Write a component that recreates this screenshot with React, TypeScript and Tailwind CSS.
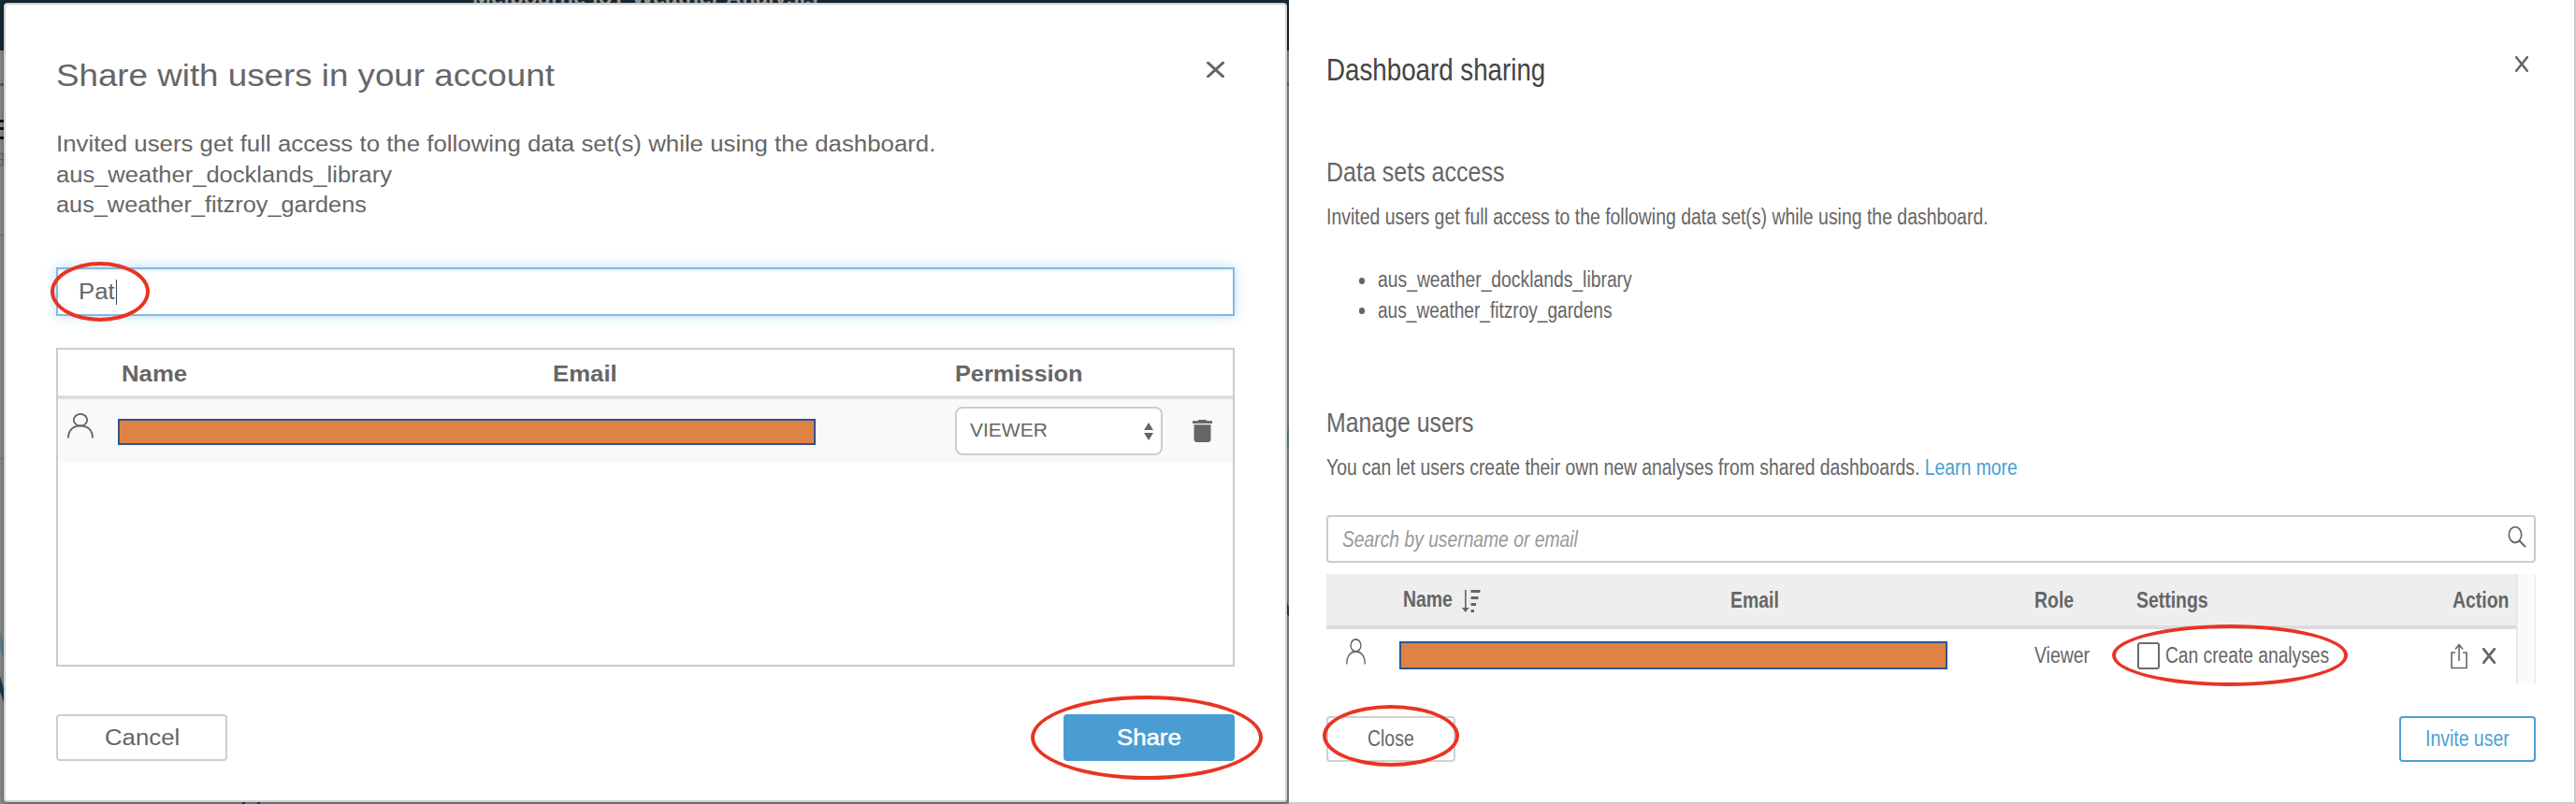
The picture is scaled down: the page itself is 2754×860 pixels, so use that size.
import type { ReactNode } from "react";
import { clsx } from "clsx";

// Helvetica-style text, stretched for the share dialog
function Wide({ children, scale = "scale-x-[1.12]" }: { children: ReactNode; scale?: string }) {
  return <span className={clsx("inline-block origin-left whitespace-nowrap", scale)}>{children}</span>;
}

// ...and condensed for the dashboard sharing page
function Narrow({ children, scale = "scale-x-[0.845]" }: { children: ReactNode; scale?: string }) {
  return <span className={clsx("inline-block origin-left whitespace-nowrap", scale)}>{children}</span>;
}

function Highlight({ className }: { className: string }) {
  return <div className={clsx("absolute rounded-[50%] border-4 border-[#e93423] pointer-events-none", className)} />;
}

function CloseIcon({ className, strokeWidth = 3 }: { className?: string; strokeWidth?: number }) {
  return (
    <svg className={className} viewBox="0 0 18 17" preserveAspectRatio="none" fill="none" stroke="#666" strokeWidth={strokeWidth}>
      <path d="M1.5 1.2 L16.5 15.8 M16.5 1.2 L1.5 15.8" strokeLinecap="round" />
    </svg>
  );
}

function UserIcon({ className }: { className?: string }) {
  return (
    <svg className={className} viewBox="0 0 28 28" preserveAspectRatio="none" fill="none" stroke="#666" strokeWidth="1.9">
      <ellipse cx="14" cy="7.4" rx="7.2" ry="6.5" />
      <path d="M1 27.5 C1 19 6 14 14 14 C22 14 27 19 27 27.5" />
    </svg>
  );
}

function Redacted({ className }: { className: string }) {
  return <div className={clsx("shrink-0 bg-[#df8344] border-2 border-[#32528f]", className)} />;
}

function ShareDialog() {
  return (
    <section className="relative w-[1378px] h-[860px] shrink-0 overflow-hidden bg-[#8f8f8e]">
      {/* dimmed analysis page behind the dialog */}
      <div className="relative h-[54px] bg-[#172b36]">
        <span className="absolute left-[505px] top-[-17px] text-[24px] leading-7 font-bold text-[#a9a9a9] whitespace-nowrap">
          Melbourne IoT Weather Analysis
        </span>
      </div>
      <svg className="absolute left-0 top-0" width="1378" height="860" fill="none">
        <path d="M0 90.5H1378" stroke="#2b6f97" strokeWidth="3" />
        <path d="M0 251.5H1378M0 490.5H1378M1370 730.5H1378" stroke="#767676" />
        <path d="M0 129.5H4M0 137.5H4M0 147.5H4" stroke="#111" strokeWidth="3" />
        <path d="M0 164.5H3M0 170.5H3M0 176.5H3M3.5 164V177" stroke="#666" strokeWidth="1.5" />
        <path d="M0 675L5 694V708L0 694Z" fill="#5f8791" />
        <path d="M0 723L5 740V754L0 740Z" fill="#1d3b4e" />
        <path d="M1378 455L1375 466V478H1378Z" fill="#5f8791" />
        <path d="M1375 641L1378 650V660L1375 655Z" fill="#1d3b4e" />
        <path d="M260.5 856V860M276.5 856V860" stroke="#1d3b4e" strokeWidth="3" />
      </svg>

      <div className="absolute left-1 top-[3px] w-[1372px] h-[855px] rounded bg-white border-2 border-[#d2d2d2] shadow-[0_1px_6px_rgba(0,0,0,0.5)] px-[54px] pt-14">
        <header className="flex justify-between h-10">
          <h1 className="text-[33px] leading-10">
            <Wide scale="scale-x-[1.113]">Share with users in your account</Wide>
          </h1>
          <CloseIcon className="w-[19px] h-[17px] mt-[5px] mr-[11px]" />
        </header>

        <div className="mt-[37px] h-[98px] leading-[32.5px]">
          <p><Wide scale="scale-x-[1.123]">Invited users get full access to the following data set(s) while using the dashboard.</Wide></p>
          <p><Wide scale="scale-x-[1.11]">aus_weather_docklands_library</Wide></p>
          <p><Wide scale="scale-x-[1.1]">aus_weather_fitzroy_gardens</Wide></p>
        </div>

        <div className="mt-[50px] h-[52px] flex items-center pl-[22px] border-2 border-[#7fbbdf] shadow-[0_0_12px_rgba(102,175,233,0.45),inset_0_2px_2px_rgba(0,0,0,0.06)]">
          <span className="w-10 pt-px"><Wide>Pat</Wide></span>
          <span className="w-px h-[27px] bg-[#444]" />
        </div>

        <div className="mt-[34px] h-[341px] border-2 border-[#ccc]">
          <div className="grid grid-cols-[68px_461px_430px_1fr] items-center h-[53px] pt-[3px] border-b-4 border-[#dedede] font-bold">
            <span />
            <Wide>Name</Wide>
            <Wide>Email</Wide>
            <Wide scale="scale-x-[1.1]">Permission</Wide>
          </div>
          <div className="flex items-start h-[68px] bg-[#f9f9f9] pl-2.5">
            <UserIcon className="w-7 h-[27px] mt-[15px] shrink-0" />
            <Redacted className="ml-[26px] mt-[21px] w-[746px] h-7" />
            <div className="ml-[149px] mt-2 w-[222px] h-[52px] shrink-0 flex items-center justify-between pl-3.5 pr-2 rounded-lg border-2 border-[#ccc] bg-white">
              <span className="text-[21px] -mt-0.5">VIEWER</span>
              <svg className="w-2.5 h-[19px]" viewBox="0 0 10 19" fill="#666">
                <path d="M5 0L10 8H0ZM0 11H10L5 19Z" />
              </svg>
            </div>
            <svg className="ml-8 mt-[22px] w-[21px] h-6 shrink-0" viewBox="5 3 14 18" preserveAspectRatio="none" fill="#666">
              <path d="M6 19c0 1.1.9 2 2 2h8c1.1 0 2-.9 2-2V7H6v12zM19 4h-3.5l-1-1h-5l-1 1H5v2h14V4z" />
            </svg>
          </div>
        </div>

        <footer className="mt-[51px] flex justify-between">
          <button className="w-[183px] h-[50px] rounded border-2 border-[#cdcdcd] pl-[50px] text-left">
            <Wide>Cancel</Wide>
          </button>
          <button className="w-[183px] h-[50px] rounded bg-[#4a9dd3] pl-[57px] text-left text-white [-webkit-text-stroke:0.5px_white]">
            <Wide>Share</Wide>
          </button>
        </footer>
      </div>

      <Highlight className="left-[54px] top-[280px] w-[106px] h-16" />
      <Highlight className="left-[1102px] top-[744px] w-[248px] h-[90px]" />
    </section>
  );
}

function SortIcon() {
  return (
    <svg className="w-5 h-6" viewBox="0 0 20 24" fill="#666">
      <path d="M3 0H4.6V19H7.6L3.8 24L0 19H3ZM9.5 0H19.5V3H9.5ZM9.5 7H17.5V10H9.5ZM9.5 14H15V17H9.5ZM9.5 21H13V24H9.5Z" />
    </svg>
  );
}

function DashboardSharing() {
  return (
    <section className="relative w-[1376px] h-[860px] shrink-0 bg-white border-r-2 border-b-2 border-[#ccc] pl-10 pr-[41px] pt-[55px]">
      <header className="flex justify-between h-10">
        <h1 className="text-[33px] leading-10 text-[#444]"><Narrow scale="scale-x-[0.84]">Dashboard sharing</Narrow></h1>
        <CloseIcon className="w-[14px] h-[17px] mt-[5px] mr-2" />
      </header>

      <h2 className="mt-[69px] text-[29.6px] leading-10"><Narrow>Data sets access</Narrow></h2>
      <p className="mt-3 leading-8">
        <Narrow>Invited users get full access to the following data set(s) while using the dashboard.</Narrow>
      </p>
      <ul className="mt-[35px] h-[65px] pl-[35px] leading-[32.5px]">
        <li className="flex items-center">
          <span className="w-1.5 h-[7px] rounded-full bg-[#666] mr-3.5 mt-0.5" />
          <Narrow scale="scale-x-[0.84]">aus_weather_docklands_library</Narrow>
        </li>
        <li className="flex items-center">
          <span className="w-1.5 h-[7px] rounded-full bg-[#666] mr-3.5 mt-0.5" />
          <Narrow scale="scale-x-[0.83]">aus_weather_fitzroy_gardens</Narrow>
        </li>
      </ul>

      <h2 className="mt-[84px] text-[29.6px] leading-10"><Narrow scale="scale-x-[0.84]">Manage users</Narrow></h2>
      <p className="mt-3 leading-8">
        <Narrow scale="scale-x-[0.842]">
          You can let users create their own new analyses from shared dashboards.{" "}
          <a className="text-[#4a9fd5]">Learn more</a>
        </Narrow>
      </p>

      <div className="mt-[35px] h-[51px] flex items-center justify-between pl-[15px] pr-2 rounded border-2 border-[#ccc]">
        <span className="italic text-[#999] pt-0.5"><Narrow scale="scale-x-[0.838]">Search by username or email</Narrow></span>
        <svg className="w-5 h-6 -mt-1.5" viewBox="0 0 20 24" fill="none" stroke="#666" strokeWidth="1.7">
          <ellipse cx="8" cy="10" rx="6.7" ry="8.3" />
          <path d="M12.5 16.5L19 23" strokeWidth="2" />
        </svg>
      </div>

      <div className="mt-3 h-[117px] flex">
        <div className="w-[1272px]">
          <div className="grid grid-cols-[82px_350px_325px_109px_338px_1fr] items-center h-[59px] pt-0.5 bg-[#eee] border-b-4 border-[#dcdcdc] font-bold">
            <span />
            <div className="flex items-center">
              <span className="w-[63px] -mt-0.5"><Narrow>Name</Narrow></span>
              <SortIcon />
            </div>
            <Narrow>Email</Narrow>
            <Narrow>Role</Narrow>
            <Narrow>Settings</Narrow>
            <Narrow>Action</Narrow>
          </div>
          <div className="flex items-start pl-[21px]">
            <UserIcon className="w-[21px] h-7 mt-2.5 shrink-0" />
            <Redacted className="ml-9 mt-[13px] w-[586px] h-[30px]" />
            <span className="ml-[93px] mt-3 w-[110px] leading-8"><Narrow>Viewer</Narrow></span>
            <span className="mt-3.5 w-6 h-[29px] shrink-0 rounded-[3px] border-2 border-[#6b6b6b]" />
            <span className="ml-1.5 mt-3 w-[305px] leading-8"><Narrow scale="scale-x-[0.835]">Can create analyses</Narrow></span>
            <svg className="mt-[15px] w-[18px] h-7 shrink-0" viewBox="0 0 18 28" fill="none" stroke="#666" strokeWidth="1.6">
              <path d="M5 10H1V26.5H17V10H13M9 19V2M5 6.5L9 1.5L13 6.5" />
            </svg>
            <CloseIcon className="ml-4 mt-5 w-[14px] h-[17px] shrink-0" strokeWidth={3.2} />
          </div>
        </div>
        <div className="w-[21px] bg-[#fafafa] border-l-2 border-r border-[#e8e8e8]" />
      </div>

      <footer className="mt-[35px] flex justify-between">
        <button className="w-[138px] h-[49px] rounded border-2 border-[#d0d0d0] pl-[42px] text-left"><Narrow>Close</Narrow></button>
        <button className="w-[146px] h-[49px] rounded border-2 border-[#4a9fd5] pl-[26px] text-left text-[#4a9fd5]">
          <Narrow>Invite user</Narrow>
        </button>
      </footer>

      <Highlight className="left-[880px] top-[668px] w-[252px] h-[66px]" />
      <Highlight className="left-9 top-[754px] w-[146px] h-[66px]" />
    </section>
  );
}

export default function App() {
  return (
    <main className="flex w-[2754px] h-[860px] overflow-hidden font-['Helvetica_Neue','Liberation_Sans',Arial,sans-serif] text-[23px] text-[#666]">
      <ShareDialog />
      <DashboardSharing />
    </main>
  );
}
